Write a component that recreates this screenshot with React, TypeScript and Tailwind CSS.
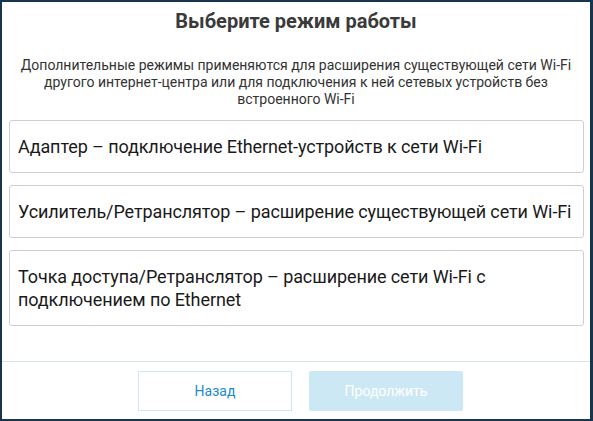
import React from "react";

const options = [
  "Адаптер – подключение Ethernet-устройств к сети Wi-Fi",
  "Усилитель/Ретранслятор – расширение существующей сети Wi-Fi",
  "Точка доступа/Ретранслятор – расширение сети Wi-Fi с подключением по Ethernet",
];

export default function App() {
  return (
    <div
      className="w-[593px] h-[421px] bg-[#17354e] pt-[2px] pl-[2px] pr-[3px] pb-[2px]"
      style={{ fontFamily: "Roboto, 'Noto Sans', sans-serif" }}
    >
      <div className="w-full h-full bg-white flex flex-col">
        <div className="flex-1 flex flex-col">
          <h1 className="pt-[7px] text-center text-[20px] leading-[24px] font-bold text-[#3a3a3a]">
            Выберите режим работы
          </h1>
          <p className="mt-[24px] px-[10px] text-center text-[14px] leading-[17px] text-[#333333]">
            Дополнительные режимы применяются для расширения существующей сети Wi-Fi
            <br />
            другого интернет-центра или для подключения к ней сетевых устройств без
            <br />
            встроенного Wi-Fi
          </p>
          <div className="mt-[12px] pl-[7px] pr-[6px] flex flex-col gap-[12px]">
            {options.map((o) => (
              <div
                key={o}
                className="border border-[#cfcfcf] rounded-[3px] pl-[8px] pr-[2px] py-[14px] text-[18px] leading-[23px] tracking-[-0.1px] text-[#1a1a1a]"
              >
                {o}
              </div>
            ))}
          </div>
        </div>
        <div className="border-t border-[#d6e3ec] h-[58px] flex justify-center gap-[17px] pt-[9px] pl-[9px]">
          <button className="w-[154px] h-[40px] border border-[#cde7f6] bg-white text-[14px] text-[#1b8ccd]">
            Назад
          </button>
          <button className="w-[154px] h-[40px] rounded-[2px] bg-[#cde8f5] text-[14px] text-white">
            Продолжить
          </button>
        </div>
      </div>
    </div>
  );
}
